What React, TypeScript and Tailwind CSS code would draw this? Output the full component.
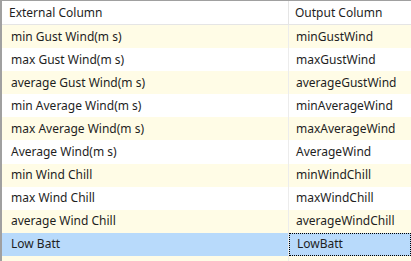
const rows: [string, string][] = [
  ["min Gust Wind(m s)", "minGustWind"],
  ["max Gust Wind(m s)", "maxGustWind"],
  ["average Gust Wind(m s)", "averageGustWind"],
  ["min Average Wind(m s)", "minAverageWind"],
  ["max Average Wind(m s)", "maxAverageWind"],
  ["Average Wind(m s)", "AverageWind"],
  ["min Wind Chill", "minWindChill"],
  ["max Wind Chill", "maxWindChill"],
  ["average Wind Chill", "averageWindChill"],
  ["Low Batt", "LowBatt"],
  ["", ""],
];

export default function App() {
  return (
    <div
      className="h-[261px] w-[411px] overflow-hidden border-l-2 border-t border-[#a0a0a0] bg-white text-[12px] text-[#1e1e1e]"
      style={{ fontFamily: '"Segoe UI", "Noto Sans", sans-serif' }}
    >
      <div className="flex h-[24px] items-center border-b border-[#e5e5e5]">
        <div className="w-[287px] border-r border-[#e5e5e5] pl-[7px] leading-[23px]">External Column</div>
        <div className="pl-[6px] leading-[23px]">Output Column</div>
      </div>
      {rows.map(([ext, out], i) => {
        const selected = i === 9;
        const bg = selected ? "bg-[#b8dafb]" : i % 2 === 0 ? "bg-[#fffce6]" : "bg-white";
        return (
          <div key={i} className={`flex h-[23.1px] items-stretch ${bg}`}>
            <div className="flex w-[287px] items-center border-r border-[#ececec] pl-[9px]">{ext}</div>
            <div
              className={`flex flex-1 items-center pl-[7px] ${
                selected ? "border border-dotted border-black pl-[6px]" : ""
              }`}
            >
              {out}
            </div>
          </div>
        );
      })}
    </div>
  );
}
